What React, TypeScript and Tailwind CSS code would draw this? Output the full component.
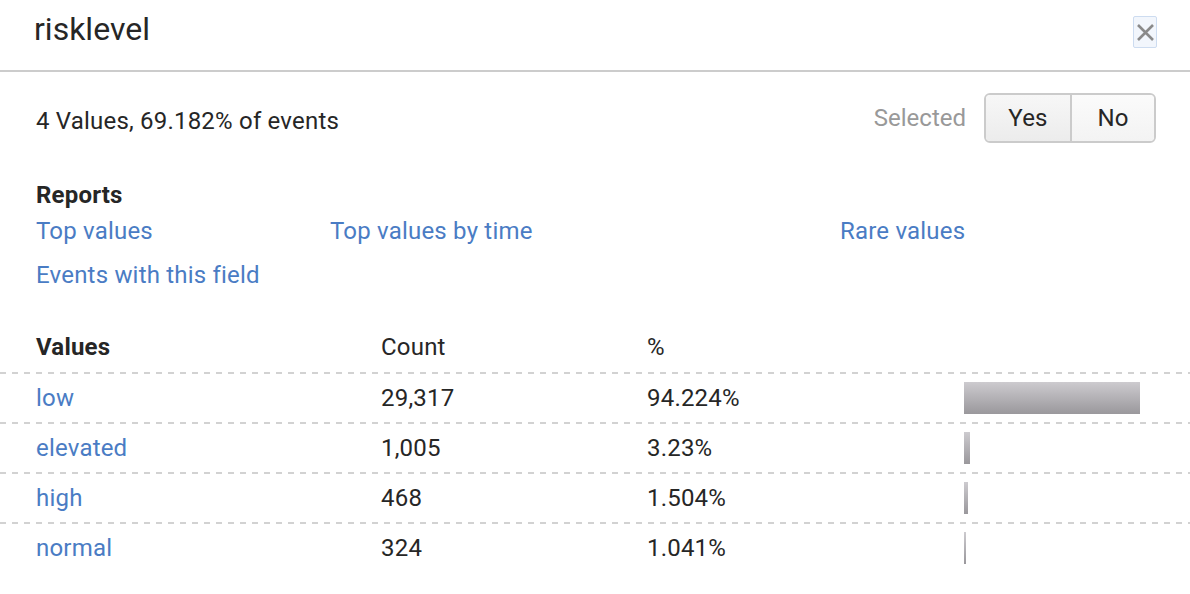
import React from 'react';

const rows = [
  { value: 'low', count: '29,317', pct: '94.224%', bar: 176 },
  { value: 'elevated', count: '1,005', pct: '3.23%', bar: 6 },
  { value: 'high', count: '468', pct: '1.504%', bar: 4 },
  { value: 'normal', count: '324', pct: '1.041%', bar: 2 },
];

const Dashed = () => (
  <div className="h-[2px] w-full bg-[linear-gradient(to_right,#d2d2d2_50%,transparent_50%)] bg-[length:12px_2px] bg-repeat-x" />
);

const App: React.FC = () => {
  return (
    <div className="w-[1190px] h-[594px] bg-white text-[#262626] font-['Roboto','Liberation_Sans',sans-serif] overflow-hidden">
      {/* Header */}
      <div className="h-[72px] border-b-2 border-[#cccccc] flex items-start justify-between pl-[34px] pr-[33px]">
        <h1 className="pt-[10px] text-[32px] leading-[38px] font-normal">risklevel</h1>
        <button className="mt-[16px] w-[24px] h-[32px] flex items-center justify-center border border-[#cddcf0] bg-[#f2f6fc] rounded-[2px] text-[#8a8a8a]">
          <svg width="19" height="19" viewBox="0 0 19 19">
            <path d="M2 2 L17 17 M17 2 L2 17" stroke="currentColor" strokeWidth="2.6" />
          </svg>
        </button>
      </div>

      {/* Body */}
      <div className="pt-[21px] text-[24px] tracking-[0.2px]">
        <div className="flex items-center justify-between pl-[36px] pr-[34px] h-[50px]">
          <span className="leading-[28px] pt-[5px]">4 Values, 69.182% of events</span>
          <div className="flex items-center gap-[18px]">
            <span className="text-[#999999] tracking-normal">Selected</span>
            <div className="flex h-[50px] rounded-[6px] border-2 border-[#cbcbcb] overflow-hidden">
              <button className="w-[86px] bg-linear-to-b from-[#f7f7f7] to-[#ececec] border-r-2 border-[#cbcbcb]">Yes</button>
              <button className="w-[82px] bg-linear-to-b from-[#fbfbfb] to-[#f3f3f3]">No</button>
            </div>
          </div>
        </div>

        {/* Reports */}
        <div className="pl-[36px] mt-[38px]">
          <div className="leading-[28px] font-bold">Reports</div>
          <div className="grid grid-cols-[294px_510px_1fr] leading-[44px] text-[#4a7cc4]">
            <a>Top values</a>
            <a>Top values by time</a>
            <a>Rare values</a>
            <a>Events with this field</a>
          </div>
        </div>

        {/* Table */}
        <div className="mt-[25px]">
          <div className="grid grid-cols-[345px_266px_317px_1fr] h-[50px] items-center pl-[36px]">
            <span className="font-bold">Values</span>
            <span>Count</span>
            <span>%</span>
            <span />
          </div>
          {rows.map((r) => (
            <div key={r.value}>
              <Dashed />
              <div className="grid grid-cols-[345px_266px_317px_1fr] h-[48px] items-center pl-[36px]">
                <a className="text-[#4a7cc4]">{r.value}</a>
                <span>{r.count}</span>
                <span>{r.pct}</span>
                <div
                  className="h-[32px] bg-linear-to-b from-[#cdcbcf] to-[#9a989c]"
                  style={{ width: r.bar }}
                />
              </div>
            </div>
          ))}
        </div>
      </div>
    </div>
  );
};

export default App;
